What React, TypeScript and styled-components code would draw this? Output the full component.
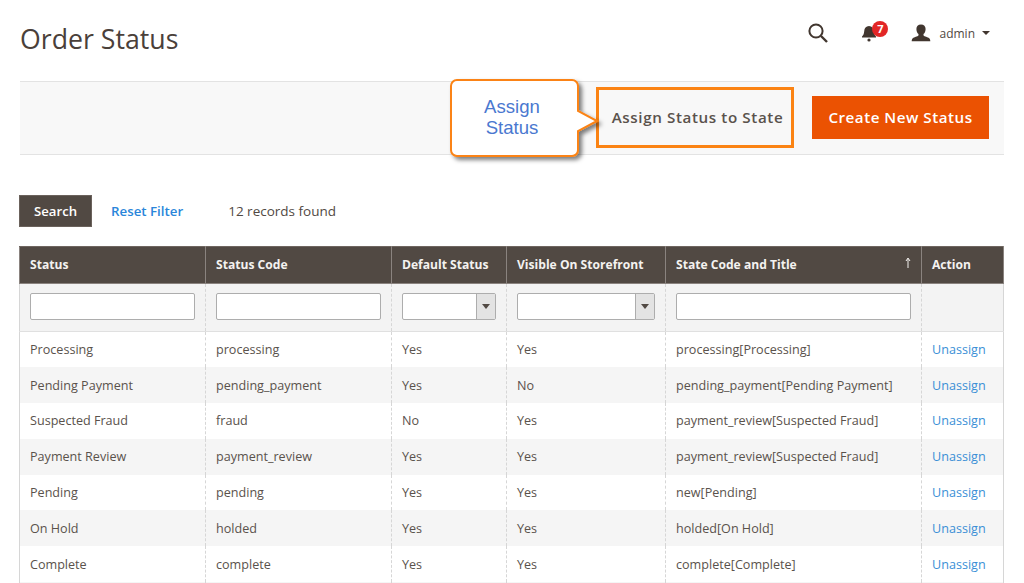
import React from 'react';
import styled, { createGlobalStyle } from 'styled-components';

const GlobalStyle = createGlobalStyle`
  html, body {
    margin: 0;
    padding: 0;
    background: #fff;
  }
  body {
    font-family: "Open Sans", "Liberation Sans", sans-serif;
    color: #41362f;
  }
  * {
    box-sizing: border-box;
  }
`;

const Page = styled.div`
  width: 1024px;
  height: 583px;
  overflow: hidden;
  padding: 0 20px 0 19px;
`;

const Header = styled.header`
  height: 81px;
  display: flex;
  align-items: flex-start;
  justify-content: space-between;
`;

const Title = styled.h1`
  margin: 21px 0 0 1px;
  font-size: 26.7px;
  line-height: 36px;
  font-weight: 400;
  color: #4a403a;
`;

const Actions = styled.div`
  display: flex;
  align-items: center;
  margin-top: 21px;
  margin-right: 14px;
  height: 24px;
`;

const IconSlot = styled.span`
  position: relative;
  display: flex;
  align-items: center;
  margin-right: ${({ $gap }: { $gap: number }) => $gap}px;
`;

const Badge = styled.span`
  position: absolute;
  top: -2px;
  left: 12px;
  width: 16px;
  height: 16px;
  border-radius: 50%;
  background: #e22626;
  color: #fff;
  font-size: 11px;
  font-weight: 700;
  line-height: 16px;
  text-align: center;
`;

const UserName = styled.span`
  margin-left: 8px;
  font-size: 12px;
  color: #514943;
`;

const Caret = styled.span`
  margin-left: 7px;
  width: 0;
  height: 0;
  border-left: 4px solid transparent;
  border-right: 4px solid transparent;
  border-top: 4px solid #41362f;
`;

const Toolbar = styled.div`
  position: relative;
  height: 74px;
  margin-left: 1px;
  display: flex;
  align-items: center;
  justify-content: flex-end;
  gap: 18px;
  padding: 0 15px 2px 0;
  background: #f8f8f8;
  border-top: 1px solid #e3e3e3;
  border-bottom: 1px solid #e3e3e3;
`;

const AssignButton = styled.button`
  width: 198px;
  height: 61px;
  background: #f8f8f8;
  border: 3px solid #fb8313;
  font-family: inherit;
  font-size: 15.2px;
  letter-spacing: 0.6px;
  font-weight: 600;
  color: #5a524c;
  padding: 0 0 0 5px;
`;

const PrimaryButton = styled.button`
  width: 177px;
  height: 43px;
  background: #eb5202;
  border: 0;
  font-family: inherit;
  font-size: 15.2px;
  letter-spacing: 0.5px;
  font-weight: 600;
  color: #fff;
  padding: 0;
`;

const Callout = styled.div`
  position: absolute;
  left: 430px;
  top: -3px;
  width: 150px;
  height: 80px;
`;

const CalloutShape = styled.svg`
  position: absolute;
  inset: 0;
  overflow: visible;
`;

const CalloutText = styled.div`
  position: absolute;
  left: 0;
  top: 17px;
  width: 124px;
  font-family: "Liberation Sans", Arial, sans-serif;
  font-size: 18.6px;
  line-height: 21px;
  color: #4a78d0;
  text-align: center;
`;

const GridActions = styled.div`
  display: flex;
  align-items: center;
  margin-top: 40px;
  height: 32px;
`;

const SearchButton = styled.button`
  width: 73px;
  height: 32px;
  background: #514943;
  border: 1px solid #6b625c;
  color: #fff;
  font-family: inherit;
  font-size: 13.2px;
  font-weight: 600;
  padding: 0;
`;

const ResetLink = styled.a`
  margin-left: 19px;
  color: #2a86da;
  font-weight: 600;
  font-size: 13.3px;
`;

const Records = styled.span`
  margin-left: 45px;
  color: #514943;
  font-size: 13.5px;
`;

const Table = styled.table`
  width: 984px;
  margin-top: 19px;
  border-collapse: collapse;
  table-layout: fixed;
  font-size: 12.6px;
  border-left: 1px solid #d6d6d6;
  border-right: 1px solid #d6d6d6;
`;

const HeadCell = styled.th`
  position: relative;
  height: 37px;
  padding: 0 10px 2px;
  background: #514943;
  color: #f4f2f0;
  font-size: 12.1px;
  font-weight: 700;
  text-align: left;
  border: 1px solid #8a837f;
  border-top-color: #6f6660;
  white-space: nowrap;
`;

const SortArrow = styled.svg`
  position: absolute;
  right: 9px;
  top: 10px;
`;

const FilterCell = styled.td`
  height: 48px;
  padding: 0 10px 2px;
  background: #f3f3f3;
  border-left: 1px dashed #d6d6d6;
  border-right: 1px dashed #d6d6d6;
  border-bottom: 1px solid #e0e0e0;
`;

const TextFilter = styled.input`
  display: block;
  width: 100%;
  height: 27px;
  background: #fff;
  border: 1px solid #adadad;
  border-radius: 2px;
  padding: 0;
`;

const SelectFilter = styled.div`
  display: flex;
  justify-content: flex-end;
  width: 100%;
  height: 27px;
  background: #fff;
  border: 1px solid #adadad;
  border-radius: 2px;
`;

const SelectArrow = styled.span`
  display: flex;
  align-items: center;
  justify-content: center;
  width: 19px;
  background: #e3e3e3;
  border-left: 1px solid #adadad;

  &::after {
    content: '';
    border-left: 4px solid transparent;
    border-right: 4px solid transparent;
    border-top: 5px solid #514943;
  }
`;

const Row = styled.tr`
  background: ${({ $odd }: { $odd: boolean }) => ($odd ? '#f5f5f5' : '#fff')};
`;

const Cell = styled.td`
  height: 35.8px;
  padding: 0 10px;
  color: #5a524c;
  border-left: 1px dashed #d6d6d6;
  border-right: 1px dashed #d6d6d6;
  white-space: nowrap;
`;

const ActionLink = styled.a`
  color: #3a8fd6;
`;

const rows = [
  ['Processing', 'processing', 'Yes', 'Yes', 'processing[Processing]'],
  ['Pending Payment', 'pending_payment', 'Yes', 'No', 'pending_payment[Pending Payment]'],
  ['Suspected Fraud', 'fraud', 'No', 'Yes', 'payment_review[Suspected Fraud]'],
  ['Payment Review', 'payment_review', 'Yes', 'Yes', 'payment_review[Suspected Fraud]'],
  ['Pending', 'pending', 'Yes', 'Yes', 'new[Pending]'],
  ['On Hold', 'holded', 'Yes', 'Yes', 'holded[On Hold]'],
  ['Complete', 'complete', 'Yes', 'Yes', 'complete[Complete]'],
];

const columns = [186, 186, 115, 159, 256, 82];

const App = () => (
  <>
    <GlobalStyle />
    <Page>
      <Header>
        <Title>Order Status</Title>
        <Actions>
          <IconSlot $gap={31}>
            <svg width="22" height="22" viewBox="0 0 22 22" fill="none" stroke="#41362f">
              <circle cx="9" cy="9" r="6.6" strokeWidth="2" />
              <path d="M14 14l6 6" strokeWidth="2.4" />
            </svg>
          </IconSlot>
          <IconSlot $gap={33}>
            <svg width="18" height="20" viewBox="0 0 18 20" fill="#41362f">
              <path d="M9 3c3 0 4.600 2.200 4.800 5.200.2 2.700.9 4.100 2.200 5.300v1H2v-1c1.300-1.200 2-2.600 2.200-5.300C4.400 5.200 6 3 9 3z" />
              <circle cx="9" cy="17" r="1.600" />
            </svg>
            <Badge>7</Badge>
          </IconSlot>
          <svg width="20" height="20" viewBox="0 0 20 20" fill="#41362f">
            <path d="M10 1.500c3 0 4.600 1.800 4.600 4.500 0 2.100-.8 4-2.100 5.100v1.200c0 1 3.200 1.500 5.400 2.700.9.500 1.400 1.700 1.400 3.300H.7c0-1.600.5-2.800 1.400-3.300 2.200-1.200 5.400-1.700 5.400-2.700v-1.200C6.200 10 5.400 8.100 5.400 6c0-2.700 1.600-4.500 4.600-4.500z" />
          </svg>
          <UserName>admin</UserName>
          <Caret />
        </Actions>
      </Header>

      <Toolbar>
        <AssignButton>Assign Status to State</AssignButton>
        <PrimaryButton>Create New Status</PrimaryButton>
        <Callout>
          <CalloutShape width="150" height="80" viewBox="0 0 150 80">
            <defs>
              <filter id="callout-shadow" x="-10%" y="-10%" width="125%" height="130%">
                <feDropShadow dx="3" dy="3" stdDeviation="2" floodColor="#000" floodOpacity="0.5" />
              </filter>
            </defs>
            <path
              d="M7 1h115a6 6 0 0 1 6 6v25l19 10-19 10v19a6 6 0 0 1-6 6H7a6 6 0 0 1-6-6V7a6 6 0 0 1 6-6z"
              fill="#fff"
              stroke="#fb8313"
              strokeWidth="2"
              filter="url(#callout-shadow)"
            />
          </CalloutShape>
          <CalloutText>
            Assign
            <br />
            Status
          </CalloutText>
        </Callout>
      </Toolbar>

      <GridActions>
        <SearchButton>Search</SearchButton>
        <ResetLink>Reset Filter</ResetLink>
        <Records>12 records found</Records>
      </GridActions>

      <Table>
        <colgroup>
          {columns.map((width, i) => (
            <col key={i} style={{ width }} />
          ))}
        </colgroup>
        <thead>
          <tr>
            <HeadCell>Status</HeadCell>
            <HeadCell>Status Code</HeadCell>
            <HeadCell>Default Status</HeadCell>
            <HeadCell>Visible On Storefront</HeadCell>
            <HeadCell>
              State Code and Title
              <SortArrow width="8" height="12" viewBox="0 0 8 12" fill="none" stroke="#f4f2f0">
                <path d="M4 11V2M2 4l2-3 2 3" strokeWidth="1" />
              </SortArrow>
            </HeadCell>
            <HeadCell>Action</HeadCell>
          </tr>
          <tr>
            <FilterCell><TextFilter /></FilterCell>
            <FilterCell><TextFilter /></FilterCell>
            <FilterCell><SelectFilter><SelectArrow /></SelectFilter></FilterCell>
            <FilterCell><SelectFilter><SelectArrow /></SelectFilter></FilterCell>
            <FilterCell><TextFilter /></FilterCell>
            <FilterCell />
          </tr>
        </thead>
        <tbody>
          {rows.map((row, i) => (
            <Row key={row[0]} $odd={i % 2 === 1}>
              {row.map((text, j) => (
                <Cell key={j}>{text}</Cell>
              ))}
              <Cell><ActionLink>Unassign</ActionLink></Cell>
            </Row>
          ))}
          <Row $odd>
            {columns.map((_, j) => (
              <Cell key={j} />
            ))}
          </Row>
        </tbody>
      </Table>
    </Page>
  </>
);

export default App;
